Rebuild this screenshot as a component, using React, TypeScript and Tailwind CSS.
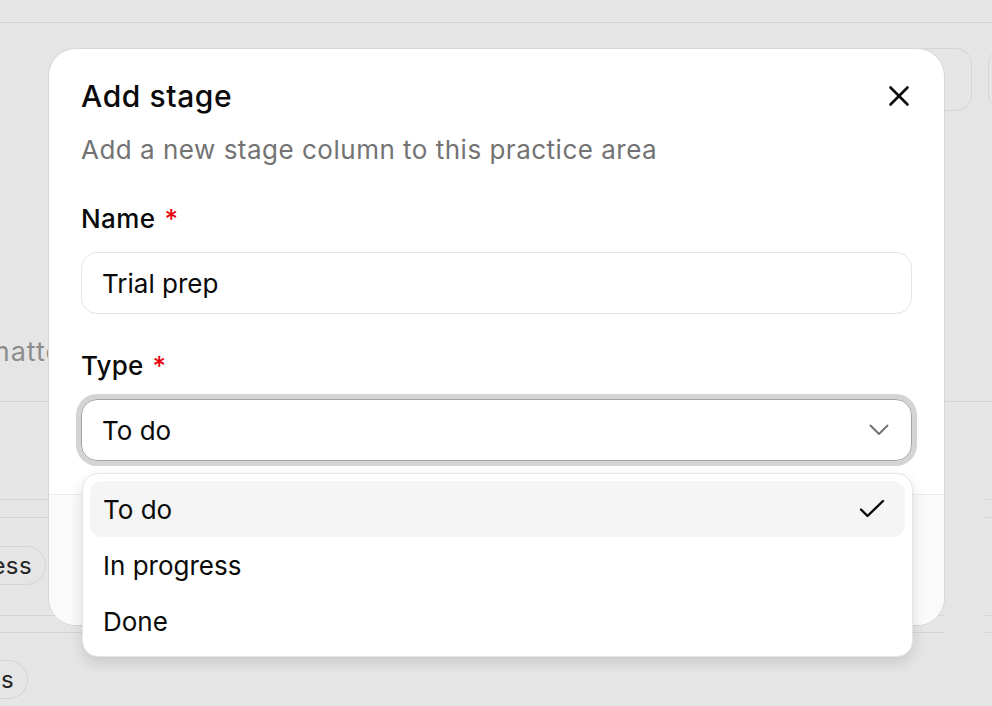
import React from "react";

function Line({ split = false }: { split?: boolean }) {
  if (!split) return <div className="h-0 border-t-[1.5px] border-[#d4d4d4]" />;
  return (
    <div className="flex h-0">
      <div className="w-[944px] border-t-[1.5px] border-[#d4d4d4]" />
      <div className="ml-[41px] flex-1 border-t-[1.5px] border-[#d4d4d4]" />
    </div>
  );
}

function Pill({ right, label, h }: { right: string; label: string; h: string }) {
  return (
    <div className={`flex ${h}`}>
      <div className={`flex ${right} justify-end`}>
        <div className="flex shrink-0 items-center whitespace-nowrap rounded-full border-[1.5px] border-[#d4d4d4] pl-[13px] pr-[13px] text-[24px] tracking-[0.4px] text-[#262626]">
          {label}
        </div>
      </div>
    </div>
  );
}

export default function App() {
  return (
    <div className="relative h-[706px] w-[992px] overflow-hidden bg-[#e5e5e5] font-['Inter','Noto_Sans',sans-serif] text-[#0a0a0a]">
      {/* background page */}
      <div className="flex flex-col">
        <div className="h-[22px]" />
        <Line />
        <div className="mt-[25px] mr-[-58px] flex h-[63px] justify-end gap-[16px]">
          <div className="w-[62px] rounded-[16px] border-[1.5px] border-[#d4d4d4]" />
          <div className="w-[62px] rounded-[16px] border-[1.5px] border-[#d4d4d4]" />
        </div>
        <div className="flex h-[258px] items-end">
          <div className="mb-[-1px] ml-[-14px] whitespace-nowrap text-[27px] leading-[36px] tracking-[1px] text-[#8c8c8c]">matters</div>
        </div>
        <div className="h-[32px]" />
        <Line />
        <div className="h-[97px]" />
        <Line split />
        <div className="h-[18px]" />
        <Line split />
        <div className="h-[29px]" />
        <Pill right="w-[46px]" label="In progress" h="h-[39px]" />
        <div className="h-[30px]" />
        <Line split />
        <div className="h-[17px]" />
        <Line split />
        <div className="h-[28px]" />
        <Pill right="w-[28px]" label="Tasks" h="h-[39px]" />
      </div>

      {/* modal */}
      <div className="absolute left-[48px] top-[48px] flex h-[578px] w-[897px] flex-col overflow-hidden rounded-[28px] border border-[#d6d6d6] bg-white">
        <div className="flex flex-col px-[32px] pt-[29px]">
          <div className="flex items-center justify-between">
            <h2 className="text-[30px] font-medium leading-[36px] tracking-[0.6px]">Add stage</h2>
            <svg width="24" height="24" viewBox="0 0 24 24" className="mr-[1px]" fill="none" stroke="#0a0a0a" strokeWidth="2.6" strokeLinecap="round">
              <path d="M3.5 3.5 20.5 20.5M20.5 3.5 3.5 20.5" />
            </svg>
          </div>
          <p className="mt-[18px] text-[26px] leading-[36px] tracking-[0.5px] text-[#737373]">Add a new stage column to this practice area</p>
          <label className="mt-[33px] text-[26px] font-medium leading-[36px] tracking-[0.4px]">
            Name<span className="ml-[9px] text-[#e7000b]">*</span>
          </label>
          <div className="mt-[15px] flex h-[62px] items-center rounded-[16px] border-[1.5px] border-[#e5e5e5] px-[20px] text-[26px]">
            Trial prep
          </div>
          <label className="mt-[34px] text-[26px] font-medium leading-[36px] tracking-[0.2px]">
            Type<span className="ml-[9px] text-[#e7000b]">*</span>
          </label>
          <div className="mt-[15px] flex h-[62px] items-center justify-between rounded-[16px] border-[1.5px] border-[#a3a3a3] pl-[20px] pr-[22px] text-[26px] ring-[5px] ring-[#d4d4d4]">
            <span>To do</span>
            <svg width="20" height="12" viewBox="0 0 20 12" fill="none" stroke="#737373" strokeWidth="2" strokeLinecap="round" strokeLinejoin="round">
              <path d="M1.5 1.5 10 10l8.5-8.5" />
            </svg>
          </div>
        </div>
        <div className="mt-[33px] flex-1 border-t-[1.5px] border-[#ececec] bg-[#fafafa]" />
      </div>

      {/* dropdown */}
      <div className="absolute left-[82px] top-[473px] w-[831px] rounded-[16px] border-[1.5px] border-[#e5e5e5] bg-white p-[7px] shadow-[0_6px_14px_rgba(0,0,0,0.12)]">
        <div className="flex h-[56px] items-center justify-between rounded-[12px] bg-[#f5f5f5] pl-[13px] pr-[20px] text-[26px]">
          <span>To do</span>
          <svg width="26" height="20" viewBox="0 0 26 20" fill="none" stroke="#0a0a0a" strokeWidth="2.4" strokeLinecap="round" strokeLinejoin="round">
            <path d="M2 10.5 8.5 17 24 2" />
          </svg>
        </div>
        <div className="flex h-[56px] items-center pl-[13px] text-[26px]">In progress</div>
        <div className="flex h-[56px] items-center pl-[13px] text-[26px]">Done</div>
      </div>
    </div>
  );
}
